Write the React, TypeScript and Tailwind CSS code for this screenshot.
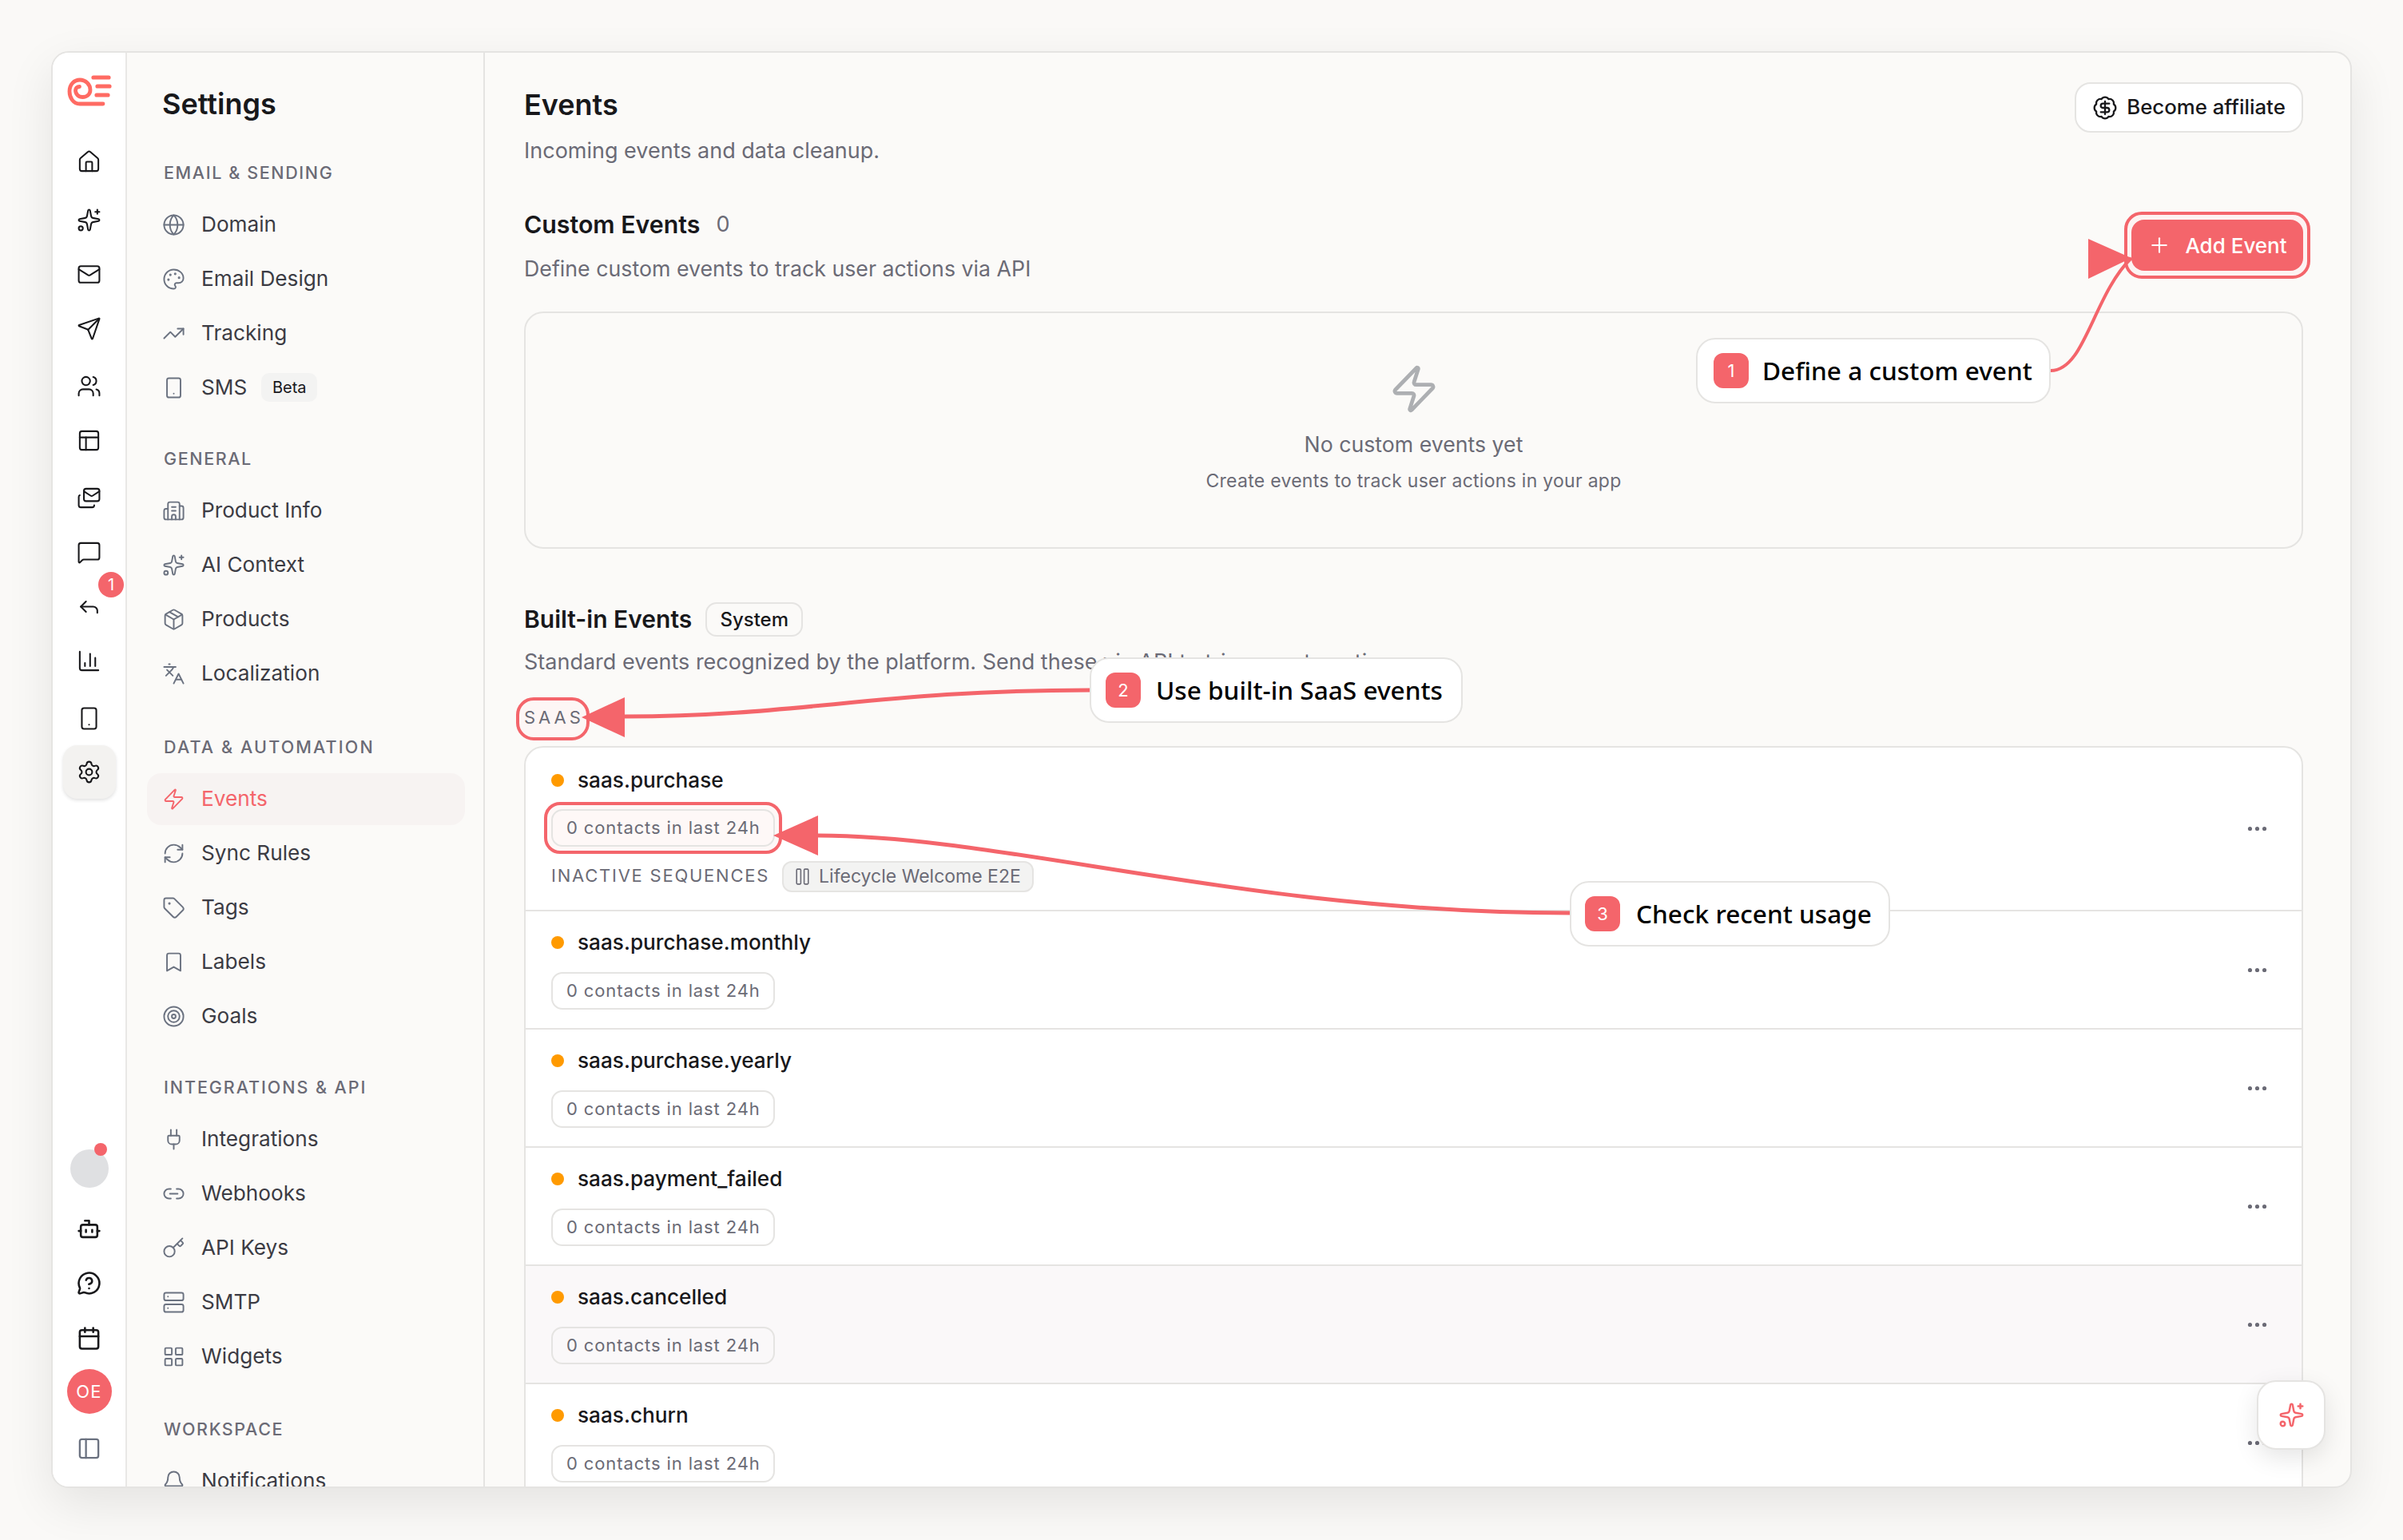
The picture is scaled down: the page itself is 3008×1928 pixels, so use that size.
import {
  House, Sparkles, Mail, Send, Users, PanelsTopLeft, Mails, MessageSquare, Reply, ChartColumn, Smartphone, Settings,
  Bot, MessageCircleQuestion, Calendar, PanelLeft, Globe, Palette, TrendingUp, Building2, Package, Languages, Zap,
  RefreshCw, Tag, Bookmark, Target, Plug, Link2, Key, Server, LayoutGrid, Bell, BadgeDollarSign, Plus, Ellipsis, Pause,
} from 'lucide-react';

const sans = 'font-["Inter",sans-serif]';

const railTop = [
  { icon: House, gap: 'mt-[43px]' },
  { icon: Sparkles, gap: 'mt-[42px]' },
  { icon: Mail, gap: 'mt-[37px]' },
  { icon: Send, gap: 'mt-[37px]' },
  { icon: Users, gap: 'mt-[41px]' },
  { icon: PanelsTopLeft, gap: 'mt-[37px]' },
  { icon: Mails, gap: 'mt-[41px]' },
  { icon: MessageSquare, gap: 'mt-[37px]' },
  { icon: Reply, gap: 'mt-[37px]' },
  { icon: ChartColumn, gap: 'mt-[37px]' },
  { icon: Smartphone, gap: 'mt-[41px]' },
];

const groups = [
  {
    label: 'EMAIL & SENDING',
    gap: 'mt-[48px]',
    track: 'tracking-[0.075em]',
    items: [
      { icon: Globe, label: 'Domain' },
      { icon: Palette, label: 'Email Design' },
      { icon: TrendingUp, label: 'Tracking' },
      { icon: Smartphone, label: 'SMS', beta: true },
    ],
  },
  {
    label: 'GENERAL',
    gap: 'mt-[39px]',
    track: 'tracking-[0.075em]',
    items: [
      { icon: Building2, label: 'Product Info' },
      { icon: Sparkles, label: 'AI Context' },
      { icon: Package, label: 'Products' },
      { icon: Languages, label: 'Localization' },
    ],
  },
  {
    label: 'DATA & AUTOMATION',
    gap: 'mt-[42px]',
    track: 'tracking-[0.1em]',
    items: [
      { icon: Zap, label: 'Events', active: true },
      { icon: RefreshCw, label: 'Sync Rules' },
      { icon: Tag, label: 'Tags' },
      { icon: Bookmark, label: 'Labels' },
      { icon: Target, label: 'Goals' },
    ],
  },
  {
    label: 'INTEGRATIONS & API',
    gap: 'mt-[39px]',
    track: 'tracking-[0.09em]',
    items: [
      { icon: Plug, label: 'Integrations' },
      { icon: Link2, label: 'Webhooks' },
      { icon: Key, label: 'API Keys' },
      { icon: Server, label: 'SMTP' },
      { icon: LayoutGrid, label: 'Widgets' },
    ],
  },
  {
    label: 'WORKSPACE',
    gap: 'mt-[41px]',
    track: 'tracking-[0.075em]',
    items: [{ icon: Bell, label: 'Notifications' }],
  },
];

const events = ['saas.purchase.monthly', 'saas.purchase.yearly', 'saas.payment_failed', 'saas.cancelled', 'saas.churn'];

function Logo() {
  return (
    <svg width="72" height="60" viewBox="0 0 72 60" fill="none" stroke="#ff6b63" strokeLinecap="round">
      <path
        d="M53 46H24C15.5 46 11 38 11 30.5C11 21.5 17 16 24 16C31.5 16 37 22 37 28.5C37 34 33 37.5 27.5 37.5C22 37.5 18.5 33.5 18.5 29C18.5 26.5 20.5 24.5 23.5 24.5"
        strokeWidth="4.8"
      />
      <path d="M41 13H60M46 24H61M45 35H59" strokeWidth="5.2" />
    </svg>
  );
}

function Chip() {
  return (
    <span className="flex h-[47px] w-[280px] items-center rounded-[14px] border-2 border-[#e5e4e2] pl-[17px] text-[22px] tracking-[0.04em] text-[#6b6b76]">
      0 contacts in last 24h
    </span>
  );
}

function Callout({ n, text, className, badge }: { n: number; text: string; className: string; badge: string }) {
  return (
    <div className={`absolute flex h-[82px] items-center rounded-[24px] border-2 border-[#e5e4e2] bg-white ${className}`}>
      <span className={`flex h-[44px] w-[44px] items-center justify-center rounded-[12px] bg-[#f4656b] text-[22px] text-white ${badge}`}>{n}</span>
      <span className='font-["Noto_Sans",sans-serif] text-[31.6px] font-medium text-black'>{text}</span>
    </div>
  );
}

export default function App() {
  return (
    <div className={`relative h-[1928px] w-[3008px] overflow-hidden bg-[#faf9f7] pl-[64px] pt-[64px] ${sans}`}>
      <div className="flex h-[1799px] w-[2880px] overflow-hidden rounded-[22px] border-2 border-[#e5e4e2] bg-[#fbfaf8] shadow-[0_20px_60px_rgba(0,0,0,0.09)]">
        {/* Icon rail */}
        <aside className="flex h-full w-[93px] shrink-0 flex-col items-center border-r-2 border-[#e9e8e6] bg-white text-[#18181b]">
          <div className="mt-[18px] h-[60px]"><Logo /></div>
          {railTop.map(({ icon: Icon, gap }, i) => (
            <div key={i} className={`relative h-[31px] w-[31px] ${gap}`}>
              <Icon size={31} strokeWidth={1.6} />
              {Icon === Reply && (
                <span className="absolute -right-[28px] -top-[28px] flex h-[32px] w-[32px] items-center justify-center rounded-full bg-[#f4656b] text-[20px] text-white">1</span>
              )}
            </div>
          ))}
          <div className="mt-[18px] flex h-[67px] w-[66px] shrink-0 items-center justify-center rounded-[18px] bg-[#f3f2f0] shadow-[0_2px_4px_rgba(0,0,0,0.12)]">
            <Settings size={31} strokeWidth={1.6} />
          </div>
          <div className="relative mt-[439px] h-[48px] w-[48px] shrink-0 rounded-full bg-[#dfe0e2]">
            <span className="absolute -top-[8px] left-[30px] h-[16px] w-[16px] rounded-full bg-[#f4656b]" />
          </div>
          <Bot size={31} strokeWidth={2} className="mt-[36px] shrink-0" />
          <MessageCircleQuestion size={31} strokeWidth={2} className="mt-[37px] shrink-0" />
          <Calendar size={31} strokeWidth={2} className="mt-[38px] shrink-0" />
          <div className="mt-[23px] flex h-[56px] w-[56px] shrink-0 items-center justify-center rounded-full bg-[#f4656b] text-[22px] tracking-[0.06em] text-white">OE</div>
          <PanelLeft size={31} strokeWidth={1.8} className="mt-[28px] shrink-0 text-[#6b7280]" />
        </aside>

        {/* Settings nav */}
        <nav className="h-full w-[448px] shrink-0 border-r-2 border-[#e5e4e2] pl-[46px] pr-[24px]">
          <h1 className="-ml-[2px] mt-[42px] text-[36px] font-semibold leading-[44px] text-[#18181b]">Settings</h1>
          {groups.map(g => (
            <div key={g.label} className={g.gap}>
              <div className={`text-[21.5px] font-medium leading-[32px] text-[#6b6b76] ${g.track}`}>{g.label}</div>
              <div className="mt-[15px]">
                {g.items.map(({ icon: Icon, label, active, beta }: any) => (
                  <div key={label} className="flex h-[68px] items-center">
                    <div
                      className={`-ml-[21px] flex h-[65px] w-[398px] shrink-0 items-center gap-[20px] rounded-[18px] pl-[19px] text-[26.2px] ${active ? 'bg-[#f7f3f2] text-[#f4656b]' : 'text-[#3c3c44]'}`}
                    >
                      <Icon size={29} strokeWidth={1.6} className={active ? 'text-[#f4656b]' : 'text-[#6b7280]'} />
                      <span>{label}</span>
                      {beta && <span className="-ml-[2px] flex h-[36px] w-[70px] items-center justify-center rounded-[10px] bg-[#f3f3f2] text-[20px] text-[#18181b]">Beta</span>}
                    </div>
                  </div>
                ))}
              </div>
            </div>
          ))}
        </nav>

        {/* Main */}
        <main className="h-full min-w-0 flex-1 pl-[49px] pr-[59px] pt-[37px]">
          <div className="flex items-start justify-between">
            <div>
              <h2 className="text-[36px] font-semibold leading-[56px] text-[#18181b]">Events</h2>
              <p className="mt-[12px] text-[27px] leading-[36px] text-[#6b6b76]">Incoming events and data cleanup.</p>
            </div>
            <button className="flex h-[63px] w-[286px] items-center justify-center gap-[11px] rounded-[20px] border-2 border-[#e5e4e2] bg-white text-[25.8px] font-medium text-[#18181b]">
              <BadgeDollarSign size={32} strokeWidth={1.7} />
              Become affiliate
            </button>
          </div>

          <div className="mt-[56px] flex items-start justify-between">
            <div>
              <div className="flex items-center gap-[20px] leading-[36px]">
                <h3 className="text-[30.3px] font-semibold text-[#18181b]">Custom Events</h3>
                <span className="text-[27px] text-[#6b6b76]">0</span>
              </div>
              <p className="mt-[19px] text-[26.75px] leading-[36px] text-[#6b6b76]">Define custom events to track user actions via API</p>
            </div>
            <div className="relative mt-[12px]">
              <div className="absolute -inset-x-[9px] -inset-y-[10px] rounded-[22px] border-[4px] border-[#f4656b] bg-[#fdf3f2]" />
              <button className="relative flex h-[64px] w-[215px] items-center justify-center gap-[17px] rounded-[16px] bg-[#f4656b] text-[26px] font-medium text-white">
                <Plus size={30} strokeWidth={1.7} />
                Add Event
              </button>
            </div>
          </div>

          <div className="mt-[36px] flex h-[297px] flex-col items-center rounded-[24px] border-2 border-[#e5e4e2] pt-[63px]">
            <Zap size={64} strokeWidth={1.8} className="text-[#adafb2]" />
            <p className="mt-[19px] text-[26.7px] leading-[36px] text-[#6b6b76]">No custom events yet</p>
            <p className="mt-[12px] text-[23px] leading-[32px] tracking-[0.012em] text-[#6b6b76]">Create events to track user actions in your app</p>
          </div>

          <div className="mt-[66px] flex items-center gap-[17px]">
            <h3 className="text-[30px] font-semibold text-[#18181b]">Built-in Events</h3>
            <span className="flex h-[43px] w-[122px] items-center justify-center rounded-[14px] border-2 border-[#e5e4e2] text-[24px] font-medium text-[#18181b]">System</span>
          </div>
          <p className="mt-[13px] text-[27px] leading-[36px] text-[#6b6b76]">Standard events recognized by the platform. Send these via API to trigger automations</p>

          <div className="relative mt-[36px] h-[30px] w-fit text-[22px] leading-[30px] tracking-[0.18em] text-[#6b6b76]">
            <div className="absolute -left-[10px] -top-[10px] h-[54px] w-[92px] rounded-[22px] border-[4px] border-[#f4656b] bg-[#fdf6f5]" />
            <span className="relative">SAAS</span>
          </div>

          <div className="mt-[21px] rounded-t-[24px] border-2 border-[#e5e4e2] bg-white">
            {/* first row carries the sequences line */}
            <div className="flex h-[203px] items-center justify-between pl-[32px] pr-[40px]">
              <div className="self-start pt-[25px]">
                <div className="flex h-[32px] items-center gap-[17px] text-[26.2px] font-medium text-[#18181b]">
                  <span className="h-[16px] w-[16px] rounded-full bg-[#ff9a00]" />
                  saas.purchase
                </div>
                <div className="relative mt-[20px] w-fit">
                  <div className="absolute -inset-x-[9px] -inset-y-[9px] rounded-[20px] border-[4px] border-[#f4656b] bg-[#fef8f7]" />
                  <div className="relative"><Chip /></div>
                </div>
                <div className="mt-[17px] flex items-center gap-[16px]">
                  <span className="text-[22px] tracking-[0.08em] text-[#6b6b76]">INACTIVE SEQUENCES</span>
                  <span className="relative top-[1px] flex h-[39px] w-[315px] items-center gap-[8px] rounded-[12px] border-2 border-[#e5e4e2] bg-[#f3f3f2] pl-[11px] text-[23px] text-[#6b6b76]">
                    <Pause size={25} strokeWidth={1.5} />
                    Lifecycle Welcome E2E
                  </span>
                </div>
              </div>
              <Ellipsis size={31} strokeWidth={2} className="text-[#6b6b76]" />
            </div>
            {events.map(name => (
              <div key={name} className={`flex h-[148px] items-center justify-between border-t-2 border-[#e5e4e2] pl-[32px] pr-[40px] ${name === 'saas.cancelled' ? 'bg-[#faf8f9]' : ''}`}>
                <div>
                  <div className="flex h-[32px] items-center gap-[17px] text-[26.2px] font-medium text-[#18181b]">
                    <span className="h-[16px] w-[16px] rounded-full bg-[#ff9a00]" />
                    {name}
                  </div>
                  <div className="mt-[21px]"><Chip /></div>
                </div>
                <Ellipsis size={31} strokeWidth={2} className="text-[#6b6b76]" />
              </div>
            ))}
          </div>
        </main>
      </div>

      {/* Annotation overlay */}
      <svg className="absolute left-0 top-0" width="3008" height="1928" fill="none">
        <path d="M2567 464C2610 464 2620 370 2668 323" stroke="#f4656b" strokeWidth="4" />
        <polygon points="2614,299 2668,323 2614,349" fill="#f4656b" />
        <path d="M782 897C1000 897 1100 864 1364 864" stroke="#f4656b" strokeWidth="5" />
        <polygon points="782,873 728,898 782,923" fill="#f4656b" />
        <path d="M1024 1046C1260 1046 1560 1143 1965 1143" stroke="#f4656b" strokeWidth="5" />
        <polygon points="1024,1021 968,1046 1024,1071" fill="#f4656b" />
      </svg>
      <Callout n={1} text="Define a custom event" className="left-[2123px] top-[423px] w-[444px] pl-[20px]" badge="mr-[17px]" />
      <Callout n={2} text="Use built-in SaaS events" className="left-[1364px] top-[823px] w-[467px] pl-[18px]" badge="mr-[19px]" />
      <Callout n={3} text="Check recent usage" className="left-[1965px] top-[1103px] w-[401px] pl-[17px]" badge="mr-[20px]" />

      {/* Floating assistant button */}
      <div className="absolute left-[2825px] top-[1728px] flex h-[87px] w-[86px] items-center justify-center rounded-[24px] border-2 border-[#e5e4e2] bg-white shadow-[0_10px_30px_rgba(0,0,0,0.1)]">
        <Sparkles size={33} strokeWidth={1.8} className="text-[#f4656b]" />
      </div>
    </div>
  );
}
